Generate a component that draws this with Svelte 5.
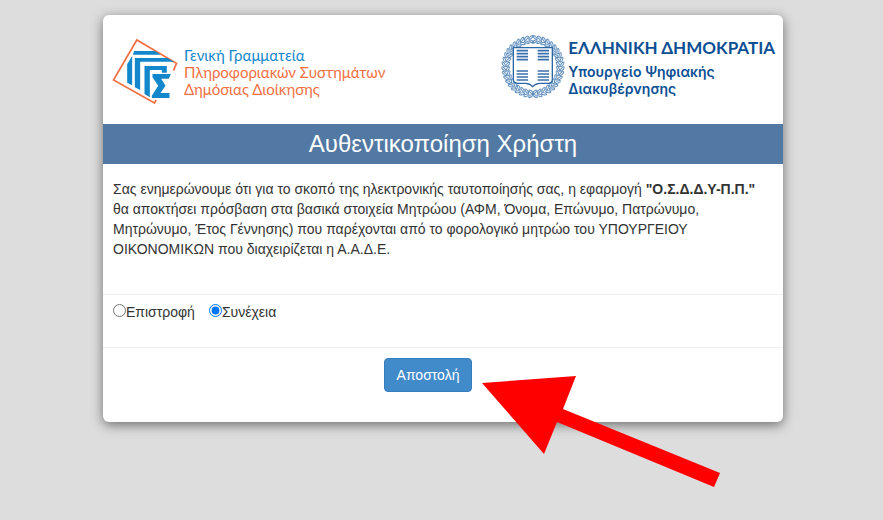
<script lang="ts">
  interface Leaf {
    x: number;
    y: number;
    angle: number;
  }

  let choice = $state("continue");

  // two rings of leaves, mirrored left and right of the crest
  function wreath(radius: number, count: number, tilt: number): Leaf[] {
    const leaves: Leaf[] = [];
    for (let i = 0; i < count; i++) {
      const deg = 4 + (i * 172) / (count - 1);
      const rad = (deg * Math.PI) / 180;
      const dx = Math.sin(rad) * radius;
      const y = 98 - Math.cos(rad) * radius;
      leaves.push({ x: 96 + dx, y, angle: deg + tilt });
      leaves.push({ x: 96 - dx, y, angle: -deg - tilt });
    }
    return leaves;
  }

  const leaves = [...wreath(88, 20, 35), ...wreath(76, 18, -35)];
  const stripes = [50, 59, 68, 77, 111, 120, 129, 138];

  function submit(event: SubmitEvent) {
    event.preventDefault();
  }
</script>

<main class="page">
  <div class="card">
    <header class="logos">
      <div class="brand">
        <svg class="brand-mark" viewBox="0 0 200 198" aria-hidden="true">
          <path
            d="M184 98L193 76L74 6L4 126L127 195L132 186"
            fill="none"
            stroke="#f26f42"
            stroke-width="5"
          />
          <g fill="#1287cc">
            <path d="M66 39H128L146 50H62Z" />
            <path d="M60 54V142L45 134V79Z" />
            <path d="M68 60H165L186 71H84V156L68 148Z" />
            <path d="M97 84H164V104H149V96H113V178L97 168Z" />
            <path d="M121 108H176L170 122H147L160 143L145 165H172V180H119V173L138 143L121 118Z" />
          </g>
        </svg>
        <p class="brand-name">
          <span class="blue">Γενική Γραμματεία</span><br />
          Πληροφοριακών Συστημάτων<br />
          Δημόσιας Διοίκησης
        </p>
      </div>

      <div class="ministry">
        <svg class="emblem" viewBox="0 0 192 198" aria-hidden="true">
          <g fill="none" stroke="#5d8cbd" stroke-width="3">
            {#each leaves as leaf}
              <ellipse rx="8" ry="3" transform="translate({leaf.x} {leaf.y}) rotate({leaf.angle})" />
            {/each}
          </g>
          <path
            d="M37 41H154V136Q154 148 142 148H116Q102 149 95 158Q88 149 74 148H50Q37 148 37 136Z"
            fill="#fff"
            stroke="#2d68a6"
            stroke-width="4"
          />
          <g stroke="#3a70ac" stroke-width="5">
            {#each stripes as y}
              <path d="M47 {y}H81M110 {y}H144" />
            {/each}
          </g>
        </svg>
        <div class="ministry-text">
          <p class="state-name">ΕΛΛΗΝΙΚΗ ΔΗΜΟΚΡΑΤΙΑ</p>
          <p class="ministry-name">Υπουργείο Ψηφιακής<br />Διακυβέρνησης</p>
        </div>
      </div>
    </header>

    <h1>Αυθεντικοποίηση Χρήστη</h1>

    <form onsubmit={submit}>
      <p class="notice">
        Σας ενημερώνουμε ότι για το σκοπό της ηλεκτρονικής ταυτοποίησής σας, η εφαρμογή
        <strong>"Ο.Σ.Δ.Δ.Υ-Π.Π."</strong> θα αποκτήσει πρόσβαση στα βασικά στοιχεία Μητρώου (ΑΦΜ,
        Όνομα, Επώνυμο, Πατρώνυμο, Μητρώνυμο, Έτος Γέννησης) που παρέχονται από το φορολογικό μητρώο
        του ΥΠΟΥΡΓΕΙΟΥ ΟΙΚΟΝΟΜΙΚΩΝ που διαχειρίζεται η Α.Α.Δ.Ε.
      </p>

      <div class="choices">
        <label><input type="radio" name="choice" value="back" bind:group={choice} />Επιστροφή</label>
        <label><input type="radio" name="choice" value="continue" bind:group={choice} />Συνέχεια</label>
      </div>

      <div class="actions">
        <button type="submit">Αποστολή</button>
      </div>
    </form>

    <svg class="arrow" viewBox="0 0 240 112" aria-hidden="true">
      <path d="M1 8L95 1L82 34L239 98L233 112L76 47L63 79Z" fill="#f00" />
    </svg>
  </div>
</main>

<style>
  :global(body) {
    margin: 0;
    background: #ddd;
  }

  .page {
    box-sizing: border-box;
    min-height: 100vh;
    padding: 15px 12px 24px 15px;
    font-family: "Liberation Sans", Arial, sans-serif;
    font-size: 14px;
    line-height: 20px;
    color: #333;
  }

  .card {
    position: relative;
    box-sizing: border-box;
    max-width: 680px;
    margin: 0 auto;
    background: #fff;
    border-radius: 6px;
    box-shadow: 0 3px 12px rgba(0, 0, 0, 0.5);
  }

  p {
    margin: 0;
  }

  .logos {
    display: flex;
    justify-content: space-between;
    align-items: flex-start;
    padding: 19px 8px 20px 9px;
  }

  .brand,
  .ministry {
    display: flex;
    align-items: flex-start;
    font-family: Lato, "Open Sans", sans-serif;
  }

  .brand {
    gap: 5px;
    padding-top: 4px;
  }

  .brand-mark {
    width: 67px;
    height: 66px;
  }

  .brand-name {
    padding-top: 9px;
    font-size: 15px;
    line-height: 17px;
    color: #f26f42;
  }

  .blue {
    color: #1287cc;
  }

  .ministry {
    gap: 2px;
    color: #0b4f94;
    font-weight: 700;
  }

  .emblem {
    width: 66px;
    height: 66px;
  }

  .state-name {
    padding-top: 4px;
    font-size: 17px;
    line-height: 20px;
  }

  .ministry-name {
    padding-top: 5px;
    font-family: Inter, "Open Sans", sans-serif;
    font-size: 14px;
    font-weight: 600;
    line-height: 17px;
  }

  h1 {
    margin: 0;
    padding: 7px 10px;
    background: #5279a3;
    color: #fff;
    font-size: 24px;
    font-weight: 400;
    line-height: 26px;
    text-align: center;
  }

  .notice {
    padding: 15px 10px 35px;
  }

  .choices {
    display: flex;
    gap: 14px;
    padding: 7px 10px 25px;
    border-top: 1px solid #eee;
  }

  .choices label {
    display: flex;
    align-items: flex-start;
  }

  .choices input {
    width: 13px;
    height: 13px;
    margin: 2px 0 0;
  }

  .actions {
    display: flex;
    justify-content: center;
    padding: 10px 40px 30px 10px;
    border-top: 1px solid #eee;
  }

  button {
    padding: 6px 12px;
    border: 1px solid #357ebd;
    border-radius: 4px;
    background: #428bca;
    color: #fff;
    font: inherit;
    cursor: pointer;
  }

  .arrow {
    position: absolute;
    top: 360px;
    left: 378px;
    width: 240px;
    height: 112px;
    pointer-events: none;
  }
</style>
